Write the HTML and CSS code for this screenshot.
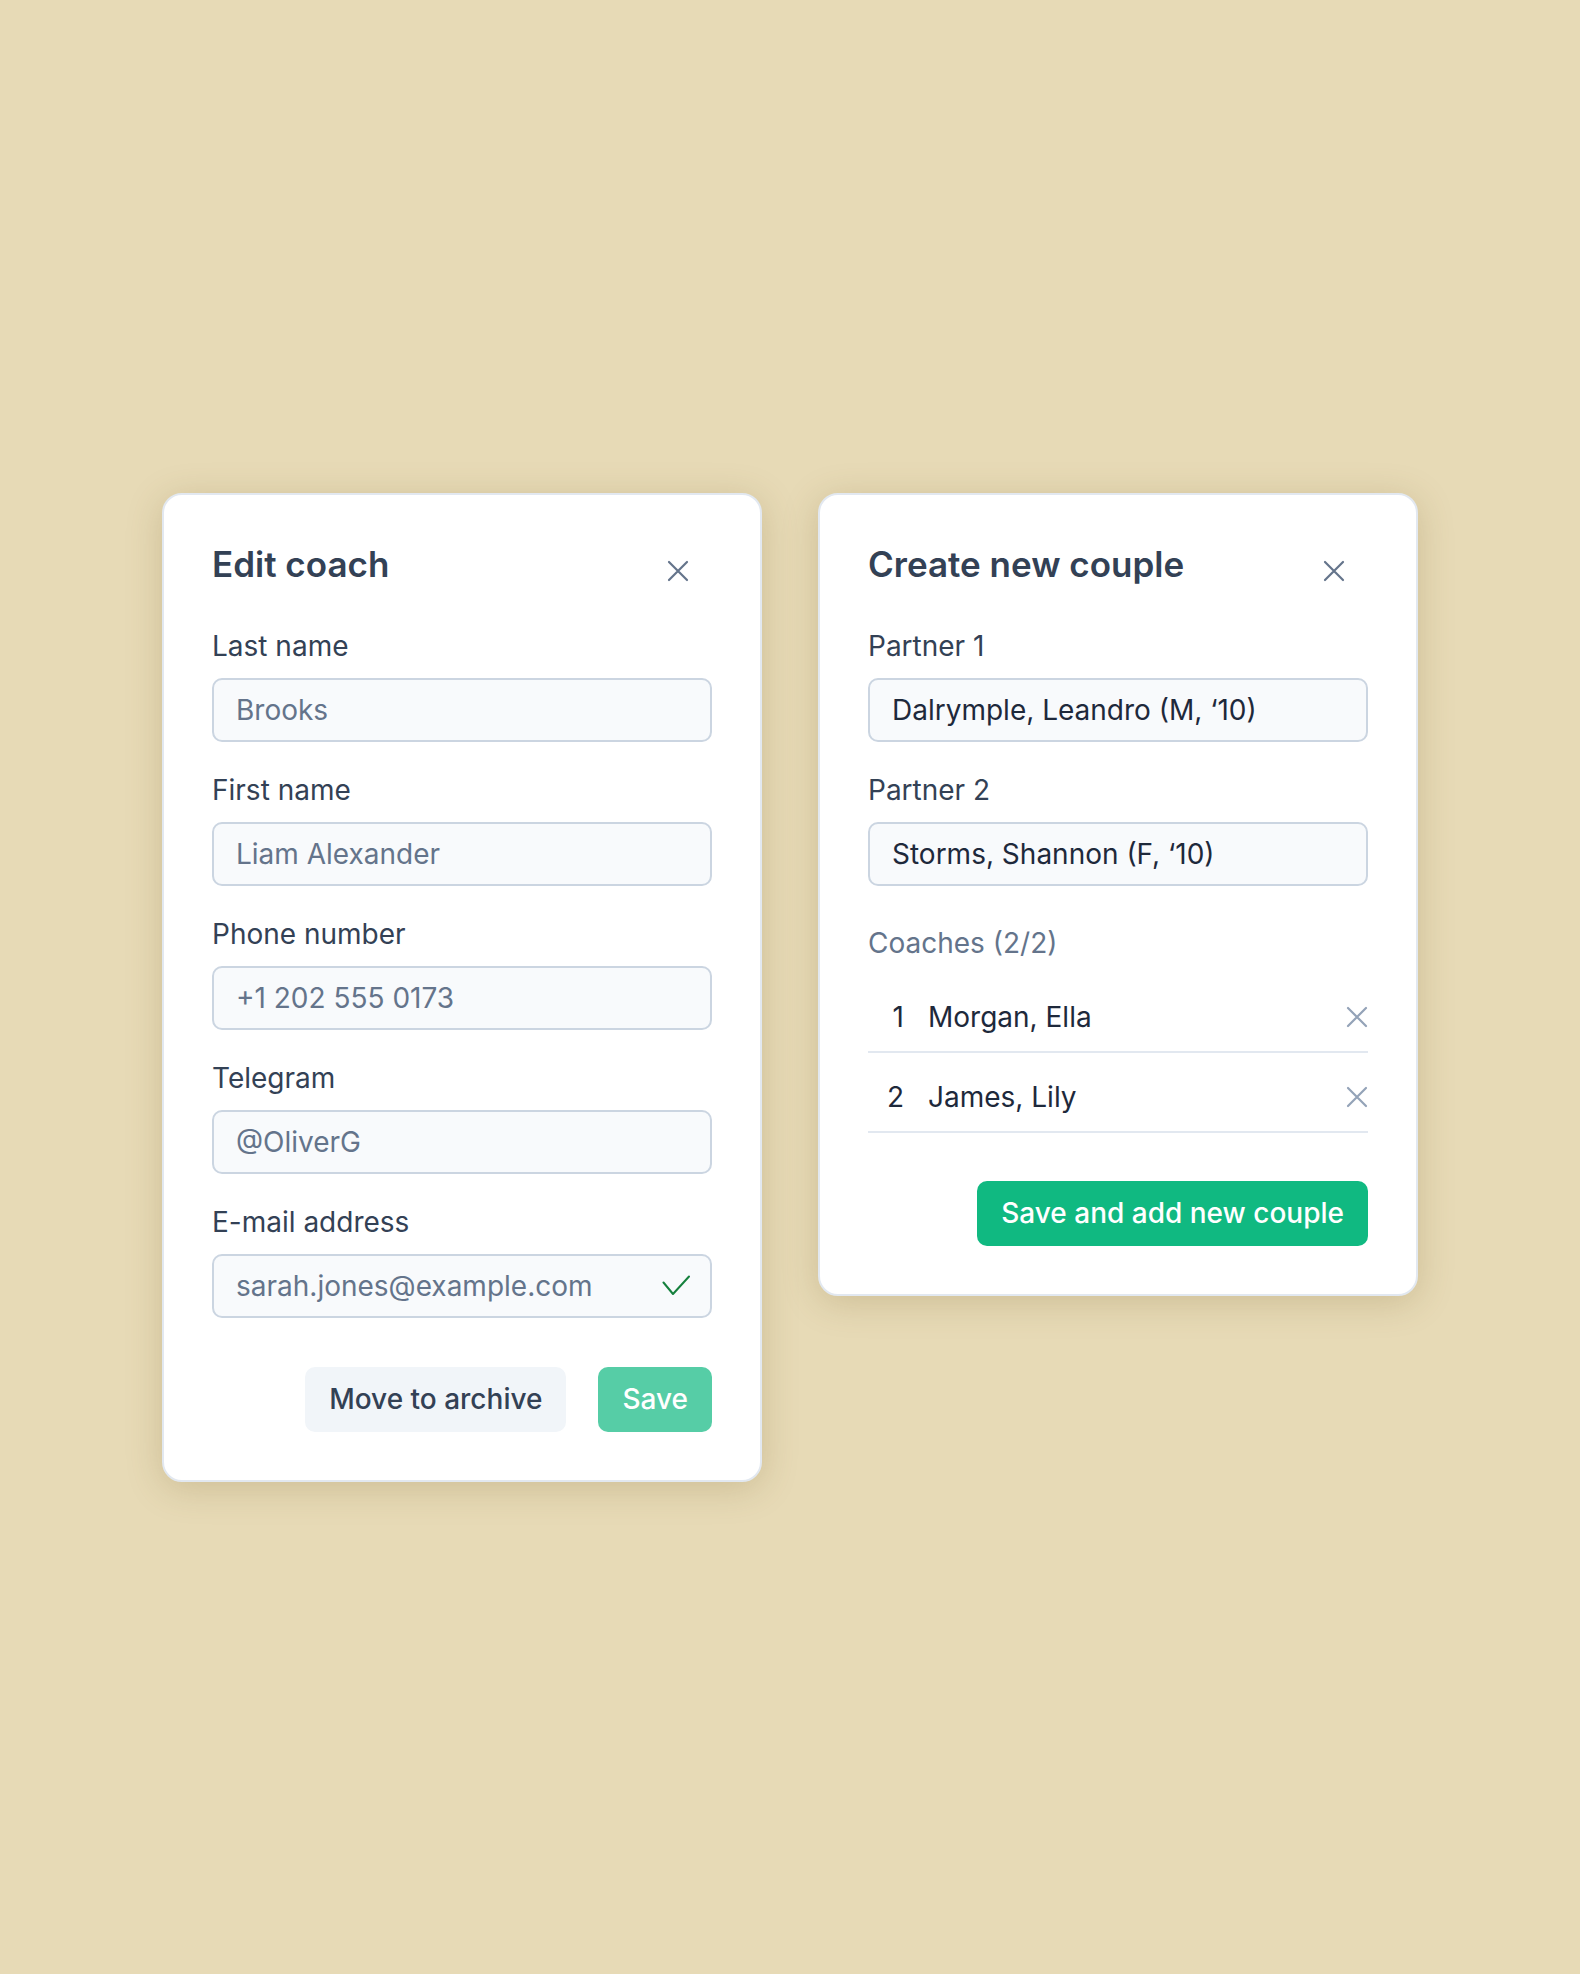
FILE: index.html
```html
<!DOCTYPE html>
<html>
<head>
    <title>Coaches and couples</title>
    <link rel="stylesheet" href="styles.css">
</head>
<body>
    <div class="dialogs">
        <div class="card">
            <div class="card-header">
                <h2>Edit coach</h2>
                <button class="close" type="button" aria-label="Close">
                    <svg width="22" height="22" viewBox="0 0 22 22"><path d="M2 2l18 18M20 2L2 20" /></svg>
                </button>
            </div>
            <form class="form">
                <div class="field">
                    <label for="last_name">Last name</label>
                    <input type="text" id="last_name" value="Brooks">
                </div>
                <div class="field">
                    <label for="first_name">First name</label>
                    <input type="text" id="first_name" value="Liam Alexander">
                </div>
                <div class="field">
                    <label for="phone">Phone number</label>
                    <input type="text" id="phone" value="+1 202 555 0173">
                </div>
                <div class="field">
                    <label for="telegram">Telegram</label>
                    <input type="text" id="telegram" value="@OliverG">
                </div>
                <div class="field">
                    <label for="email">E-mail address</label>
                    <div class="input-wrap">
                        <input type="text" id="email" value="sarah.jones@example.com">
                        <svg class="valid" width="28" height="21" viewBox="0 0 28 21"><path d="M1.5 7.5L11 19L27 1.5" /></svg>
                    </div>
                </div>
                <div class="actions">
                    <button type="button" class="btn btn-light">Move to archive</button>
                    <button type="submit" class="btn btn-primary" disabled>Save</button>
                </div>
            </form>
        </div>

        <div class="card">
            <div class="card-header">
                <h2>Create new couple</h2>
                <button class="close" type="button" aria-label="Close">
                    <svg width="22" height="22" viewBox="0 0 22 22"><path d="M2 2l18 18M20 2L2 20" /></svg>
                </button>
            </div>
            <form class="form">
                <div class="field">
                    <label for="partner_1">Partner 1</label>
                    <input type="text" id="partner_1" class="filled" value="Dalrymple, Leandro (M, ‘10)">
                </div>
                <div class="field">
                    <label for="partner_2">Partner 2</label>
                    <input type="text" id="partner_2" class="filled" value="Storms, Shannon (F, ‘10)">
                </div>
                <div class="coaches-title">Coaches (2/2)</div>
                <ul class="coach-list">
                    <li>
                        <span class="num">1</span>
                        <span class="name">Morgan, Ella</span>
                        <button class="remove" type="button" aria-label="Remove">
                            <svg width="22" height="22" viewBox="0 0 22 22"><path d="M2 2l18 18M20 2L2 20" /></svg>
                        </button>
                    </li>
                    <li>
                        <span class="num">2</span>
                        <span class="name">James, Lily</span>
                        <button class="remove" type="button" aria-label="Remove">
                            <svg width="22" height="22" viewBox="0 0 22 22"><path d="M2 2l18 18M20 2L2 20" /></svg>
                        </button>
                    </li>
                </ul>
                <div class="actions actions-tight">
                    <button type="submit" class="btn btn-primary">Save and add new couple</button>
                </div>
            </form>
        </div>
    </div>
</body>
</html>
```

FILE: styles.css
```css
body {
    font-family: Inter, "Noto Sans", sans-serif;
    margin: 0;
    padding: 0;
    min-height: 1974px;
    background-color: #e7dab6;
    display: flex;
    justify-content: center;
    align-items: center;
}
.dialogs {
    display: flex;
    align-items: flex-start;
    gap: 56px;
}
.card {
    box-sizing: border-box;
    width: 600px;
    padding: 48px;
    background-color: white;
    border: 2px solid #e2e8f0;
    border-radius: 20px;
    box-shadow: 0px 6px 36px rgba(110, 85, 30, 0.22);
}
.card-header {
    display: flex;
    justify-content: space-between;
    align-items: flex-start;
    margin-bottom: 37px;
}
h2 {
    margin: 0;
    font-size: 35px;
    line-height: 42px;
    font-weight: 600;
    color: #334155;
}
.close {
    width: 44px;
    height: 44px;
    margin: 6px 12px 0 0;
    padding: 0;
    border: none;
    background: none;
    display: flex;
    align-items: center;
    justify-content: center;
    cursor: pointer;
}
.close svg path {
    fill: none;
    stroke: #64748b;
    stroke-width: 2.2;
    stroke-linecap: round;
}
.form {
    margin: 0;
}
.field + .field {
    margin-top: 32px;
}
label {
    display: block;
    margin-bottom: 16px;
    font-size: 28px;
    line-height: 32px;
    color: #334155;
}
input[type="text"] {
    box-sizing: border-box;
    display: block;
    width: 100%;
    height: 64px;
    padding: 0 22px;
    font-family: inherit;
    font-size: 28px;
    color: #64748b;
    background-color: #f8fafc;
    border: 2px solid #cbd5e1;
    border-radius: 10px;
    outline: none;
}
input.filled {
    color: #1e293b;
}
.input-wrap {
    position: relative;
}
.input-wrap .valid {
    position: absolute;
    right: 22px;
    top: 21px;
}
.valid path {
    fill: none;
    stroke: #15803d;
    stroke-width: 2;
    stroke-linecap: round;
    stroke-linejoin: round;
}
.actions {
    display: flex;
    justify-content: flex-end;
    gap: 32px;
    margin-top: 49px;
}
.actions-tight {
    margin-top: 48px;
}
.btn {
    height: 65px;
    padding: 0 24px;
    border: none;
    border-radius: 10px;
    font-family: inherit;
    font-size: 28px;
    font-weight: 500;
    cursor: pointer;
}
.btn-light {
    background-color: #f1f5f9;
    color: #334155;
}
.btn-primary {
    background-color: #10b981;
    color: white;
}
.btn-primary:disabled {
    opacity: 0.7;
    cursor: default;
}
.coaches-title {
    margin-top: 41px;
    font-size: 28px;
    line-height: 32px;
    color: #64748b;
}
.coach-list {
    list-style: none;
    margin: 14px 0 0;
    padding: 0;
}
.coach-list li {
    display: flex;
    align-items: center;
    padding: 28px 0 18px;
    border-bottom: 2px solid #e2e8f0;
    font-size: 28px;
    line-height: 32px;
    color: #1e293b;
}
.num {
    width: 36px;
    margin-right: 24px;
    text-align: right;
}
.remove {
    margin-left: auto;
    width: 22px;
    height: 22px;
    padding: 0;
    border: none;
    background: none;
    cursor: pointer;
}
.remove svg {
    display: block;
}
.remove svg path {
    fill: none;
    stroke: #94a3b8;
    stroke-width: 2.2;
    stroke-linecap: round;
}
```
